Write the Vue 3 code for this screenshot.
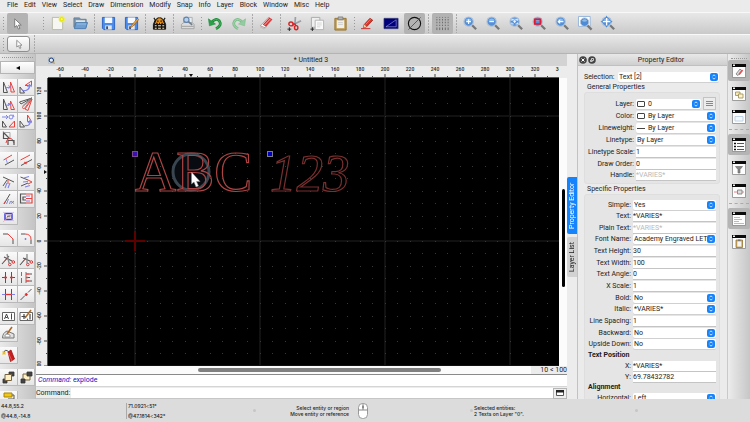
<script setup>
import { computed, h, onBeforeUnmount, onMounted, ref } from 'vue'

/* Each stroke is [path data, stroke colour, fill colour, stroke width]. */
const Ico = (props) =>
  h(
    'svg',
    { viewBox: `0 0 ${props.box} ${props.box}`, 'aria-hidden': 'true' },
    props.shapes.map(([d, stroke, fill, width]) =>
      h('path', { d, stroke: stroke || 'none', fill: fill || 'none', 'stroke-width': width || 1 })
    )
  )
Ico.props = ['box', 'shapes']

const menus = ['File', 'Edit', 'View', 'Select', 'Draw', 'Dimension', 'Modify', 'Snap', 'Info', 'Layer', 'Block', 'Window', 'Misc', 'Help']

const arrow = [['M5 3V12L7.3 10.2L9 14L10.6 13.2L9 9.6H12Z', '#777', '#fff', 1]]
const lens = [
  ['M9.500 9.500L14 14.200', '#777', null, 2.4],
  ['M1 6a5 5 0 1 0 10 0a5 5 0 1 0 -10 0', '#b4c3d4', '#5590d8', 1.2],
  ['M2.500 4.500q3.500 -3.500 7 0q-3.500 2 -7 0', null, '#8dbbea']
]
const floppy = [
  ['M1.500 1.500H14.500V14.500H3L1.500 13Z', '#2b62c4', '#4a8bec', 1],
  ['M4 1.500H12V7.500H4Z', null, '#f4f8ff'],
  ['M4.500 10H11.500V14.500H4.500Z', null, '#dfe6f0'],
  ['M5.500 11H7.500V14H5.500Z', null, '#37507d']
]

const toolbar = [
  { name: 'New', icon: [['M2.500 1.500H13.500V14.500H2.500Z', '#b9b9a8', '#f6f6f2'], ['M9.500 3.500a3 3 0 1 0 6 0a3 3 0 1 0 -6 0', '#eeee70', '#e5e510', 1], ['M11.500 3.500a1 1 0 1 0 2 0a1 1 0 1 0 -2 0', null, '#ffffb0']] },
  { name: 'Open', icon: [['M1 2H7L8 3.500H14V12H1Z', '#6b7f93', '#7995b0', 1], ['M3 4.500H13V9H3Z', null, '#dfe3e6'], ['M3 7H15.500L13.500 13.500H1.500Z', '#4c7cae', '#6e9fd0', 1], ['M4 8.500H14', '#9bc0e4']] },
  { sep: true },
  { name: 'Save', icon: floppy },
  { name: 'Save As', icon: [...floppy, ['M14.500 2.500L8 10L6.500 12.500L9 11.300L15.500 4Z', '#a65e10', '#f7b53a', 0.8]] },
  { sep: true },
  { name: 'Script', icon: [['M4 5L2 2M12 5L14 2', '#111', null, 1.2], ['M3 5L6 2H10L13 5L14.500 9V14H1.500V9Z', '#111', '#19140e', 1], ['M5 4L7 2.500H9L11 4L13 8.500H3Z', null, '#e8921c'], ['M5.500 5.500H7M9 5.500H10.500M4.500 7.800H6M7.500 7.800H8.500M10 7.800H11.500', '#111', null, 1.300], ['M3 10.500H5M6.500 10.500H9.500M11 10.500H13M3 13H5M6.500 13H9.500M11 13H13', '#f3e6c8', null, 1.1]] },
  { sep: true },
  { name: 'Print Preview', icon: [['M4 1.500H13V8H4Z', '#a9b0b8', '#e8edf2'], ['M1.500 9L4 7H13L15 9V13.500H1.500Z', '#a3a3a3', '#dcdcdc'], ['M2 11H14.500', '#9b9b9b'], ['M4 4a2.800 2.800 0 1 0 5.600 0a2.800 2.800 0 1 0 -5.600 0', '#5f82ac', '#b5d1ee', 1.2], ['M9 6L13 9.500', '#6e7f91', null, 1.8]] },
  { sep: true, dots: true },
  { name: 'Undo', icon: [['M3.500 7Q8 1.500 12 5Q15.500 10 8.500 13.500', '#1b8a3a', null, 3], ['M3.500 7Q8 1.500 12 5Q15.500 10 8.500 13.500', '#46b85e', null, 1], ['M0.500 3L1.500 10.500L8 8.500Z', '#1b8a3a', '#2ba04a', 0.6]] },
  { name: 'Redo', icon: [['M12.500 7Q8 1.500 4 5Q0.500 10 7.500 13.500', '#7dbd8b', null, 3], ['M12.500 7Q8 1.500 4 5Q0.500 10 7.500 13.500', '#a5d8ae', null, 1], ['M15.500 3L14.500 10.500L8 8.500Z', '#7dbd8b', '#93cc9f', 0.6]] },
  { sep: true },
  { name: 'Erase', icon: [['M1.500 10.500L10 1.500L14 4L6.500 12.500Z', '#a77', '#fff', 0.7], ['M4 9L11 1.500L14 3.500L7.500 11.500Z', null, '#d33030'], ['M6 9.500L12.500 2.800', '#f6c0c0', null, 1], ['M1 11.500L5.500 14L8 11.500', '#bbb', null, 1]] },
  { sep: true },
  { name: 'Cut', icon: [['M9 1L8.500 8L6 11', '#9aa0a6', null, 1.800], ['M15 5L8 8.500', '#9aa0a6', null, 1.800], ['M2 8.500a2 1.800 0 1 0 4.500 0a2 1.800 0 1 0 -4.500 0M8 12.500a1.800 2.200 0 1 0 3.600 0a1.800 2.200 0 1 0 -3.600 0', '#d62222', null, 1.500], ['M6 8.500H8.500L9.500 10.500', '#d62222', null, 1.500], ['M0.500 14H4.500M2.500 12V16', '#222']] },
  { name: 'Copy', icon: [['M1.500 1.500H10.500V12H1.500Z', '#aaa', '#efefef'], ['M5.500 4.500H14.500V14.500H5.500Z', '#b2b2b2', '#fafafa'], ['M7.500 7.500H12.500M7.500 9.500H12.500M7.500 11.500H11', '#d4d4d4'], ['M0.500 14H4.500M2.500 12V16', '#222']] },
  { name: 'Paste', icon: [['M2 2.500H14V15H2Z', '#96742f', '#c09a50', 1], ['M4 4.500H12V13H4Z', null, '#eef0ee'], ['M5.500 1H10.500V4H5.500Z', '#777', '#b5b5b5', 0.8], ['M5.500 7H10.500M5.500 9H10.500', '#ccc']] },
  { sep: true, dots: true },
  { name: 'Edit', icon: [['M0 13.500H10', '#c22', null, 1], ['M2.500 12.500L3.500 9L9.500 2.500L12.500 4.500L6 11.500Z', '#8d1c12', '#e0342a', 0.8], ['M2.500 12.500L3.500 9L6 11.500Z', null, '#f0cfa0'], ['M5 9L10.500 3', '#ff8a7a', null, 0.8]] },
  { name: 'Draft', icon: [['M0 2.500H15V13.500H0Z', '#333a70', '#00007c', 0.8], ['M2 11.500L13 4V11.500Z', '#b0b0ec', null, 0.6]] },
  { name: 'No fill', on: true, icon: [['M1.500 8a6.500 6.500 0 1 0 13 0a6.500 6.500 0 1 0 -13 0', '#111', null, 1.2], ['M1.500 14.500L14.500 1.500', '#3a3ad8', null, 0.9]] },
  { sep: true },
  { name: 'Grid', on: true, icon: [['M2 1V15M5 1V15M8 1V15M11 1V15M14 1V15', '#555', null, 0.8], ['M1 2.500H15M1 5.500H15M1 8.500H15M1 11.500H15', '#b3b3b3', null, 1.500]] },
  { sep: true },
  { name: 'Zoom In', icon: [...lens, ['M3.500 6H8.500M6 3.500V8.500', '#fff', null, 1.200]] },
  { name: 'Zoom Out', icon: [...lens, ['M3.500 6H8.500', '#fff', null, 1.200]] },
  { name: 'Auto Zoom', icon: [...lens, ['M3 5V3.500H5M7 3.500H9V5M9 7V8.500H7M5 8.500H3V7M4.500 6H7.500M6 4.500V7.500', '#fff', null, 0.9]] },
  { name: 'Zoom to Selection', icon: [...lens, ['M3 3.500H9V8.500H3Z', '#e01830', null, 1.800]] },
  { name: 'Previous View', icon: [...lens, ['M2.500 6L5.500 3.500V5.300H9V6.700H5.500V8.500Z', null, '#fff']] },
  { name: 'Window Zoom', icon: [['M0.500 0.500H13V11H0.500Z', '#94b4da', '#fff', 1], ['M10 10L14.500 14.500', '#777', null, 2.400], ['M2.500 6.500a4.500 4.500 0 1 0 9 0a4.500 4.500 0 1 0 -9 0', '#b4c3d4', '#4f8ad4', 1], ['M4 5q3 -3 6 0q-3 2 -6 0', null, '#8dbbea']] },
  { name: 'Pan', icon: [...lens, ['M6 0V12M0 6H12', '#fff', null, 1.400], ['M6 -0.500L4.500 2H7.500ZM6 12.500L4.500 10H7.500ZM-0.500 6L2 4.500V7.500ZM12.500 6L10 4.500V7.500Z', null, '#4a86d0']] }
]

const K = '#555'
const R = '#e8433f'
const B = '#7f84ea'
const toolGroups = [
  [
    { name: 'Move', icon: [['M3.500 3V13.500H7.500Z', K], ['M10.500 3L14.500 13H11Z', R], ['M5 9L10.500 8M8.500 6.500L10.500 8L8.500 9.500', B]] },
    { name: 'Rotate', icon: [['M2 8V14H6.500Z', K], ['M7 6.500L13.500 2V6.500Z', R], ['M6 12Q12 11 11.500 6M9.500 8L11.500 5.500L13.500 8M4 11L7 12', B, null, 1.200]] },
    { name: 'Scale', icon: [['M3.500 3V13.500H7.500Z', K], ['M10.500 5L14.500 13.500H11Z', R], ['M5 9.500L11 8.500M8 7L10 9M10 7L8 10', B]] },
    { name: 'Mirror', icon: [['M1.500 6L14 2L3 8Z', K], ['M14 3L7 13L10 14.500Z', R], ['M13.500 2.500L4 11.500L6 13Z', R, null, 0.8], ['M13.500 2L4.500 10', '#888']] },
    { name: 'Move and Rotate', icon: [['M2.500 8V14H6.500Z', K], ['M9 14L14.500 8V14Z', R], ['M2 4H8M6 2L8 4L6 6M9 4a2 2 0 1 0 4 0a2 2 0 1 0 -4 0M13 1.500L14 4', B]] },
    { name: 'Rotate Two', icon: [['M2 8V14H6.500Z', K], ['M9.500 2L13.500 8.500H9.500Z', R], ['M6.500 12.500Q12.500 13.500 12 8M10 10L12 7.500L13.500 10', B, null, 1.200]] },
    { name: 'Flip', icon: [['M3.500 2.500V8.500H9.500Z', K, null, 1.200], ['M3.500 2.500H10V8', '#999', null, 0.8], ['M6 13Q7 7 12 9L14 13', R], ['M8 15V10.500H14V15', K, null, 1.200]] }
  ],
  [
    { name: 'Parallel', icon: [['M3.500 8L12 3', R], ['M5 13L14 8', K], ['M6 7L7.500 11.500', B, null, 0.8]] },
    { name: 'Parallel Through', icon: [['M2.500 8L12 3', R], ['M3 13.500L14 7.500', K], ['M6 11.500L9 10M6.500 10L8.500 12', R, null, 1.200]] }
  ],
  [
    { name: 'Trim', icon: [['M3 3L14 8', K], ['M3 12L7 6', K], ['M8 10V5', R], ['M7 9L5 14M10 9L8 14', B, null, 1.100]] },
    { name: 'Trim Both', icon: [['M2.500 3L10 6M3 12L10 9', K], ['M10 6L14 8L10 10', R], ['M6 4L11 2.500M5 8L10 7.500M7 13L12 11.500', B, null, 1.200]] },
    { name: 'Lengthen', icon: [['M4 13L10 3', K], ['M4 13L5.500 10', R], ['M8.500 8L6.500 13M10.500 10L9.500 13', B], ['M11 10L14 12.500M14 10L11 12.500', '#777', null, 0.8]] },
    { name: 'Stretch', icon: [['M8 3H2.500V12H8M8 6H5V9H8', K, null, 1.200], ['M8 3H14V12H8M14 7.500H8', R, null, 1.200], ['M8 5H12M8 10H12', B]] },
    { name: 'Clip', icon: [['M5 5.500H12V11.500H5Z', '#3737dd', null, 1.400], ['M3 14L14 4M3 4L14 13', '#f0a6a4', null, 0.7], ['M7 9.500Q7 7.500 10.500 8', K]] }
  ],
  [
    { name: 'Chamfer', icon: [['M3 4H8', K], ['M8 4L13 9', R], ['M13 9V14', K]] },
    { name: 'Round', icon: [['M3 4H7M13 9.500V14', K], ['M7 4Q13 4 13 9.500', R], ['M6.500 9H8.500M7.500 8V10', B]] }
  ],
  [
    { name: 'Break Out', icon: [['M2 12L9 4M4 5L12 9', K, null, 1.100], ['M7 2L9 11', '#888', null, 1.300], ['M8.500 12.500a1.300 1.300 0 1 0 2.600 0a1.300 1.300 0 1 0 -2.600 0M12 10a1.300 1.300 0 1 0 2.600 0a1.300 1.300 0 1 0 -2.600 0', '#e03030'], ['M3.500 10.500L7 6.500', R]] },
    { name: 'Divide', icon: [['M2 13L8 6M5 6L12 9', K, null, 1.100], ['M9 2L9 11', '#888', null, 1.300], ['M8.500 12.500a1.300 1.300 0 1 0 2.600 0a1.300 1.300 0 1 0 -2.600 0M12 10a1.300 1.300 0 1 0 2.600 0a1.300 1.300 0 1 0 -2.600 0', '#e03030'], ['M5 9.500L7.500 6.500', R]] },
    { name: 'Break Gap', icon: [['M5.500 3V14M11.500 3V14', K], ['M2 8.500H5M12 8.500H15', K], ['M4 8.500H7M10 8.500H13', '#e03030', null, 1.300]] },
    { name: 'Align', icon: [['M3.500 3V7M3.500 9V14M8 3V14', K, null, 0.8], ['M8 5H11M8 8.500H10M8 12H11', R, null, 1.300], ['M11 5H14M10 8.500H12M11 12H14', K]] },
    { name: 'Auto Trim', icon: [['M5.500 3V14M11.500 3V14', K], ['M2 8.500H15', B], ['M5.500 8.500H11.500', '#e03030', null, 1.300]] },
    { name: 'Break at Point', icon: [['M2.500 14L7 9.500M10 6.500L13.500 3', K], ['M7.300 8.500a1 1 0 1 0 2 0a1 1 0 1 0 -2 0', '#e22', '#e22']] }
  ],
  [
    { name: 'Edit Text', icon: [['M2.500 4.500H14.500V12.500H2.500Z', '#555', '#fff', 0.9], ['M4.500 11L6.500 6L8.500 11M5.500 9.500H7.500M11.500 5.500V11.500', '#333', null, 0.9]] },
    { name: 'Edit Hatch', icon: [['M2 4.500H14.500V12.500H2Z', '#555', '#fff', 0.9], ['M3.500 8.500H8M6 6V11M9 11.500L10 11M12 6V11.500', '#444', null, 1.200], ['M7 10L13 2', '#ad6a2a', null, 1.600]] },
    { name: 'Edit Part', icon: [['M2.500 13Q2.500 8 7 6L14 9V13Z', '#777', '#e2e2e2'], ['M5 12V10Q7 8 10 10V12Z', '#888', '#fff', 0.8], ['M7 9L12 2', '#ad6a2a', null, 1.600]] }
  ],
  [
    { name: 'Explode', icon: [['M8 5L11 3L14.500 12L10.500 14.500Z', '#9c1414', '#c91c1c', 0.8], ['M8.500 6L12 14', '#f06060', null, 0.8], ['M4 5Q5 2 8.500 4.500', '#444'], ['M2 6H6M4 4V8M2.500 4.500L5.500 7.500M5.500 4.500L2.500 7.500', '#e8b920', null, 0.8]] }
  ],
  [
    { name: 'Bring to Front', icon: [['M9 3H14V7H9ZM3 10H7V14H3Z', '#333', '#444', 0.8], ['M5 5.500H11.500V11.500H5Z', '#77643e', '#fff0c4', 1]] },
    { name: 'Send to Back', icon: [['M5 5H12V11H5Z', '#77643e', '#fff0c4', 1], ['M9 3H14V7H9ZM3 10H7V14H3Z', '#333', '#444', 0.8]] }
  ],
  [
    { name: 'Paint', icon: [['M4 2H12V6H4Z', '#a78500', '#f0c619'], ['M12 4H14V8H8V11', K], ['M7 10H9V14H7Z', null, '#333']] }
  ]
]

const win = [['M1.500 1.500H14.500V14.500H1.500Z', '#888', '#fdfdfd', 0.8], ['M1 1H15V4H1Z', null, '#0a0a0a'], ['M2 1.500H4V3H2Z', null, '#eee']]
const docks = [
  { name: 'Property Editor', on: true, icon: [...win, ['M5 11L9 6L11 8L7 12.500Z', '#777', '#ddd', 0.8], ['M8 11.500L11.500 7', '#e05555', null, 1.800]] },
  { name: 'Block List', icon: [...win, ['M4.500 6H9V9.500H4.500Z', '#9a8a50', '#f6eab8', 0.8], ['M7.500 8H12V12H7.500Z', '#9a8a50', '#fdf3cc', 0.8]] },
  { name: 'View List', icon: [...win, ['M4 7.500H12V12H4Z', '#b9cfe4', '#f4f9ff', 0.9]] },
  { sep: true },
  { name: 'Layer List', on: true, icon: [...win, ['M3 6.500H5M3 9.500H5M3 12.500H5', '#111', null, 1.500], ['M6 6.500H13M6 9.500H13M6 12.500H13', '#555', null, 1.200]] },
  { name: 'Selection Filter', icon: [...win, ['M4.500 6.500H11.500L9 9.500V13H7V9.500Z', '#666', '#888', 0.6]] },
  { name: 'Library', icon: [...win, ['M3 9H6M10 9H13', '#d66', null, 0.8], ['M6.500 7H11V11H6.500Z', '#777', '#ddd', 0.8]] },
  { sep: true },
  { name: 'Command Line', on: true, icon: [...win, ['M3 6.500H9M3 8.500H11M3 10.500H8M3 12.500H13', '#aaa', null, 0.8]] },
  { name: 'Clipboard', icon: [...win, ['M5 6H11.500V13.500H5Z', '#96742f', '#d2ac68', 0.8], ['M6.300 7.500H10.300V12.500H6.300Z', null, '#f4f4f4'], ['M7 5.500H9.500V7H7Z', null, '#777']] }
]

const general = [
  { label: 'Color:', value: 'By Layer', kind: 'select', swatch: 'box' },
  { label: 'Lineweight:', value: 'By Layer', kind: 'select', swatch: 'line' },
  { label: 'Linetype:', value: 'By Layer', kind: 'select' },
  { label: 'Linetype Scale:', value: '1' },
  { label: 'Draw Order:', value: '0' },
  { label: 'Handle:', value: '*VARIES*', dim: true }
]
const specific = [
  { label: 'Simple:', value: 'Yes', kind: 'select' },
  { label: 'Text:', value: '*VARIES*' },
  { label: 'Plain Text:', value: '*VARIES*', dim: true },
  { label: 'Font Name:', value: 'Academy Engraved LET', kind: 'select' },
  { label: 'Text Height:', value: '30' },
  { label: 'Text Width:', value: '100' },
  { label: 'Text Angle:', value: '0' },
  { label: 'X Scale:', value: '1' },
  { label: 'Bold:', value: 'No', kind: 'select' },
  { label: 'Italic:', value: '*VARIES*', kind: 'select' },
  { label: 'Line Spacing:', value: '1' },
  { label: 'Backward:', value: 'No', kind: 'select' },
  { label: 'Upside Down:', value: 'No', kind: 'select' }
]
const position = [
  { label: 'X:', value: '*VARIES*' },
  { label: 'Y:', value: '69.78432782' }
]

/* View transform of the drawing: origin and pixels per unit. */
const X0 = 87
const Y0 = 163
const scale = 1.25
const canvas = ref(null)
const size = ref({ w: 511, h: 288 })
const measure = () => {
  const r = canvas.value.getBoundingClientRect()
  size.value = { w: r.width, h: r.height }
}
onMounted(() => {
  measure()
  window.addEventListener('resize', measure)
})
onBeforeUnmount(() => window.removeEventListener('resize', measure))

const range = (from, to, step) => Array.from({ length: Math.floor((to - from) / step) + 1 }, (_, i) => from + i * step)
const xTicks = computed(() =>
  range(-60, (size.value.w + 3 - X0) / scale, 10).map((u) => ({ u, p: X0 + u * scale, major: u % 20 === 0 }))
)
const yTicks = computed(() => {
  const bottom = -Math.floor((size.value.h + 3 - Y0) / scale / 10) * 10
  return range(bottom, 120, 10).map((u) => ({ u, p: Y0 - u * scale, major: u % 20 === 0 }))
})
const xMeta = computed(() => xTicks.value.filter((t) => t.u % 100 === 0))
const yMeta = computed(() => yTicks.value.filter((t) => t.u % 100 === 0))
const command = ref('')
</script>

<template>
  <div class="app">
    <nav class="menubar">
      <a v-for="m in menus" :key="m" href="#">{{ m }}</a>
    </nav>

    <div class="toolbar">
      <span class="sep dots"></span>
      <button class="tb on first" aria-label="Select"><Ico :box="16" :shapes="arrow" /></button>
      <span class="sep dots"></span>
      <template v-for="(t, i) in toolbar" :key="i">
        <span v-if="t.sep" class="sep" :class="{ dots: t.dots }"></span>
        <button v-else class="tb" :class="{ on: t.on }" :aria-label="t.name"><Ico :box="16" :shapes="t.icon" /></button>
      </template>
    </div>

    <div class="options">
      <span class="sep dots"></span>
      <button class="mode" aria-label="Selection mode"><Ico :box="16" :shapes="arrow" /></button>
      <span class="sep"></span>
    </div>

    <div class="main">
      <aside class="tools">
        <div class="grip"></div>
        <button class="back" aria-label="Back"><svg viewBox="0 0 4 4"><path d="M4 0V4L0 2Z" /></svg></button>
        <div v-for="(g, i) in toolGroups" :key="i" class="group">
          <button v-for="t in g" :key="t.name" class="tool" :aria-label="t.name"><Ico :box="17" :shapes="t.icon" /></button>
        </div>
      </aside>

      <section class="document">
        <header class="doc-title">
          <svg class="doc-icon" viewBox="0 0 8 8"><rect x="0.500" y="0.500" width="7" height="6.500" fill="#e8edf8" stroke="#9aa" stroke-width="0.500" /><circle cx="3.800" cy="3.600" r="2.500" fill="none" stroke="#24427f" stroke-width="1.200" /><path d="M5.300 5.300L7.500 7.500" stroke="#d99a2c" stroke-width="1.400" /></svg>
          <span>* Untitled 3</span>
        </header>
        <div class="view">
          <div class="corner"></div>
          <svg class="ruler-x">
            <g v-for="t in xTicks" :key="t.u">
              <path :d="`M${t.p} ${t.major ? 8 : 10}V12`" stroke="#444" />
              <text v-if="t.major" :x="t.p" y="5" text-anchor="middle">{{ t.u }}</text>
            </g>
            <path d="M141 8H145L143 11Z" fill="#111" />
            <path d="M0 11.500H4000" stroke="#555" />
          </svg>
          <svg class="ruler-y">
            <g v-for="t in yTicks" :key="t.u">
              <path :d="`M${t.major ? 8 : 10} ${t.p}H12`" stroke="#444" />
              <text v-if="t.major" :transform="`translate(5 ${t.p}) rotate(-90)`" text-anchor="middle">{{ t.u }}</text>
            </g>
            <path d="M8 92V96L11 94Z" fill="#111" />
            <path d="M11.500 0V4000" stroke="#555" />
          </svg>
          <svg ref="canvas" class="canvas">
            <path v-for="t in xMeta" :key="'v' + t.u" :d="`M${t.p} 0V${size.h}`" stroke="#111" stroke-width="2" />
            <path v-for="t in yMeta" :key="'h' + t.u" :d="`M0 ${t.p}H${size.w}`" stroke="#111" stroke-width="2" />
            <g fill="#383838">
              <template v-for="y in yTicks" :key="y.u">
                <rect v-for="x in xTicks" :key="x.u" :x="Math.floor(x.p)" :y="Math.floor(y.p)" width="1" height="1" />
              </template>
            </g>
            <path :d="`M${X0 - 10} ${Y0}h20M${X0} ${Y0 - 10}v20`" stroke="#5c0000" stroke-width="2" />
            <circle cx="143" cy="94" r="18" fill="#080b0f" stroke="#394650" stroke-width="3" />
            <text class="entity" x="87" y="113">ABC</text>
            <text class="entity italic" x="222" y="113">123</text>
            <rect x="84.500" y="73.500" width="5" height="5" fill="#3a10b0" stroke="#7a4a90" />
            <rect x="219.500" y="73.500" width="5" height="5" fill="#0000c0" stroke="#7c7c90" />
            <path d="M143.500 94V106L146 104L148 109L150.500 108L148.500 103.500H152Z" fill="#fff" stroke="#888" stroke-width="0.500" />
          </svg>
          <div class="vscroll"><div class="vthumb"></div></div>
          <div class="hrow">
            <div class="hscroll"><div class="hthumb"></div></div>
            <span class="gridinfo">10 &lt; 100</span>
          </div>
        </div>
        <div class="history"><em>Command:</em> explode</div>
        <div class="cmd">
          <label for="cmd">Command:</label>
          <input id="cmd" v-model="command" type="text" />
          <button aria-label="Toggle history"><svg viewBox="0 0 8 6"><path d="M0.500 0.500H7.500V5.500H0.500Z" fill="#fff" stroke="#555" /><path d="M0 0H8V2.500H0Z" fill="#222" /></svg></button>
        </div>
      </section>

      <div class="tabs">
        <button class="tab active">Property Editor</button>
        <button class="tab">Layer List</button>
      </div>

      <section class="panel">
        <header class="panel-head">
          <button class="round" aria-label="Close"><svg viewBox="0 0 8 8"><circle cx="4" cy="4" r="3.800" fill="#444" /><path d="M2.500 2.500L5.500 5.500M5.500 2.500L2.500 5.500" stroke="#fff" /></svg></button>
          <button class="round" aria-label="Float"><svg viewBox="0 0 8 8"><circle cx="4" cy="4" r="3.800" fill="#444" /><path d="M3.500 2.500H5.500V4.500H3.500ZM2.500 3.800V5.500H4.500" fill="none" stroke="#fff" stroke-width="0.700" /></svg></button>
          <h2>Property Editor</h2>
        </header>
        <div class="panel-body">
          <div class="selection">
            <label for="sel">Selection:</label>
            <span class="combo"><select id="sel"><option>Text [2]</option></select><svg class="knob" viewBox="0 0 8 8"><path d="M2.500 3.300L4 1.800L5.500 3.300M2.500 4.700L4 6.200L5.500 4.700" /></svg></span>
          </div>
          <h3>General Properties</h3>
          <div class="box general">
            <div class="row tall">
              <label for="layer">Layer:</label>
              <span class="combo swatched"><i class="sw-box"></i><select id="layer"><option>0</option></select><svg class="knob" viewBox="0 0 8 8"><path d="M2.500 3.300L4 1.800L5.500 3.300M2.500 4.700L4 6.200L5.500 4.700" /></svg></span>
              <button class="list" aria-label="Layers"><svg viewBox="0 0 7 5"><path d="M0 0.500H7M0 2.500H7M0 4.500H7" stroke="#888" /></svg></button>
            </div>
            <div v-for="(f, i) in general" :key="f.label" class="row">
              <label :for="'g' + i">{{ f.label }}</label>
              <span v-if="f.kind" class="combo" :class="{ swatched: f.swatch }"><i v-if="f.swatch" :class="'sw-' + f.swatch"></i><select :id="'g' + i"><option>{{ f.value }}</option></select><svg class="knob" viewBox="0 0 8 8"><path d="M2.500 3.300L4 1.800L5.500 3.300M2.500 4.700L4 6.200L5.500 4.700" /></svg></span>
              <input v-else :id="'g' + i" type="text" :value="f.value" :class="{ dim: f.dim }" />
            </div>
          </div>
          <h3>Specific Properties</h3>
          <div class="box specific">
            <div class="fields">
              <div v-for="(f, i) in specific" :key="f.label" class="row">
                <label :for="'s' + i">{{ f.label }}</label>
                <span v-if="f.kind" class="combo"><select :id="'s' + i"><option>{{ f.value }}</option></select><svg class="knob" viewBox="0 0 8 8"><path d="M2.500 3.300L4 1.800L5.500 3.300M2.500 4.700L4 6.200L5.500 4.700" /></svg></span>
                <input v-else :id="'s' + i" type="text" :value="f.value" :class="{ dim: f.dim }" />
              </div>
            </div>
            <h4>Text Position</h4>
            <div v-for="(f, i) in position" :key="f.label" class="row">
              <label :for="'p' + i">{{ f.label }}</label>
              <input :id="'p' + i" type="text" :value="f.value" />
            </div>
            <h4>Alignment</h4>
            <div class="row">
              <label for="halign">Horizontal:</label>
              <span class="combo"><select id="halign"><option>Left</option></select><svg class="knob" viewBox="0 0 8 8"><path d="M2.500 3.300L4 1.800L5.500 3.300M2.500 4.700L4 6.200L5.500 4.700" /></svg></span>
            </div>
          </div>
        </div>
      </section>

      <aside class="dock">
        <div class="dock-grip"></div>
        <template v-for="(d, i) in docks" :key="i">
          <span v-if="d.sep" class="dock-sep"></span>
          <button v-else class="dock-btn" :class="{ on: d.on }" :aria-label="d.name"><Ico :box="16" :shapes="d.icon" /></button>
        </template>
      </aside>
    </div>

    <footer class="status">
      <div class="coords abs"><span>44.8,55.2</span><span>@44.8,-14.8</span></div>
      <div class="coords polar"><span>71.0921&lt;51°</span><span>@47.1814&lt;342°</span></div>
      <i class="dot"></i>
      <div class="hint"><span>Select entity or region</span><span>Move entity or reference</span></div>
      <svg class="mouse" viewBox="0 0 10 16"><rect x="0.500" y="0.500" width="9" height="15" rx="4" fill="#fff" stroke="#999" /><path d="M0.500 7H9.500M5 0.500V7" stroke="#888" fill="none" /><rect x="4" y="2.500" width="2" height="3" rx="1" fill="#888" /></svg>
      <div class="entities"><i class="dot"></i><div class="lines"><span>Selected entities:</span><span>2 Texts on Layer "0".</span></div></div>
      <i class="dot last"></i>
    </footer>
  </div>
</template>

<style>
body {
  overflow: hidden;
}
</style>

<style scoped>
.app {
  display: flex;
  flex-direction: column;
  height: 100vh;
  background: #ececec;
  color: #1c1c1c;
  font-family: Roboto, "Liberation Sans", sans-serif;
  font-size: 7px;
  line-height: 10px;
}
.app * {
  box-sizing: border-box;
}
button,
input,
select {
  margin: 0;
  padding: 0;
  border: 0;
  border-radius: 0;
  outline: 0;
  background: none;
  color: inherit;
  font: inherit;
}
svg {
  display: block;
}
.menubar {
  display: flex;
  flex: none;
  gap: 6px;
  height: 12px;
  padding: 0 7px;
  background: #ebebeb;
}
.menubar a {
  color: inherit;
  text-decoration: none;
}
.toolbar,
.options {
  display: flex;
  flex: none;
  align-items: center;
  gap: 2px;
  height: 22px;
  padding-left: 2px;
  border-top: 1px solid #f8f8f8;
  background: linear-gradient(#e8e8e8, #c9c9c9);
}
.tb {
  display: grid;
  flex: none;
  place-items: center;
  width: 21px;
  height: 21px;
}
.tb svg {
  width: 15px;
  height: 15px;
  overflow: visible;
}
.tb.on {
  border-radius: 2px;
  background: #b3b3b3;
}
.tb.first {
  margin-right: 12px;
}
.sep {
  flex: none;
  width: 3px;
  height: 19px;
  background: linear-gradient(to right, transparent 1px, #aaa 1px, #aaa 2px, transparent 2px);
  mask: repeating-linear-gradient(#000 0 2px, transparent 2px 3px);
}
.sep.dots {
  height: 13px;
  background: linear-gradient(to right, transparent 1px, #999 1px, #999 2px, transparent 2px);
  mask: repeating-linear-gradient(#000 0 1px, transparent 1px 3px);
}
.options {
  height: 20px;
  border-bottom: 1px solid #b4b4b4;
}
.mode {
  display: grid;
  place-items: center;
  width: 23px;
  height: 16px;
  margin-right: 1px;
  border: 1px solid #8f8f8f;
  border-radius: 3px;
  background: linear-gradient(#fff, #e0e0e0);
}
.mode svg {
  width: 12px;
  height: 12px;
}
.main {
  display: flex;
  flex: 1;
  min-height: 0;
}
.tools {
  flex: none;
  width: 36px;
  overflow: hidden;
  border-right: 1px solid #bdbdbd;
  background: linear-gradient(to right, #e9e9e9, #c4c4c4);
}
.grip {
  height: 4px;
  margin: 0 2px 3px;
  border-bottom: 1px dotted #999;
}
.back {
  display: grid;
  place-items: center;
  width: 100%;
  height: 13px;
  margin-bottom: 5px;
  border: 1px solid #b5b5b5;
  background: linear-gradient(#fff, #e8e8e8);
}
.back svg {
  width: 4px;
  height: 4px;
}
.group {
  display: grid;
  grid-template-columns: 18px 17px;
  grid-auto-rows: 17px;
  margin-bottom: 5px;
}
.tool {
  display: grid;
  place-items: center;
  overflow: hidden;
  border: 1px solid #b9b9b9;
  border-width: 0 1px 1px 0;
  background: linear-gradient(#fafafa, #e6e6e6);
}
.tool svg {
  width: 17px;
  height: 17px;
}
.document {
  display: flex;
  flex: 1;
  flex-direction: column;
  min-width: 0;
}
.doc-title {
  display: flex;
  flex: none;
  align-items: center;
  height: 12px;
  padding-left: 12px;
  background: #d3d3d3;
}
.doc-title span {
  flex: 1;
  text-align: center;
}
.doc-icon {
  width: 7px;
  height: 7px;
}
.view {
  display: grid;
  flex: 1;
  grid-template: 12px minmax(0, 1fr) 9px / 12px minmax(0, 1fr) 8px;
  min-height: 0;
  background: #ececec;
}
.ruler-x,
.ruler-y,
.canvas {
  width: 100%;
  height: 100%;
  overflow: hidden;
}
.ruler-x,
.ruler-y {
  fill: #333;
  font-size: 5px;
  font-weight: 600;
}
.ruler-y,
.corner {
  grid-column: 1;
}
.canvas {
  background: #000;
}
.ruler-x {
  grid-column: 2;
}
.entity {
  fill: none;
  stroke: #ac4444;
  stroke-width: 1.2;
  font: 57px "Liberation Serif", serif;
}
.entity.italic {
  stroke: #7a2f2f;
  font-size: 53px;
  font-style: italic;
}
.vscroll {
  padding: 111px 2px 0 3px;
  background: #fcfcfc;
}
.vthumb {
  height: 98px;
  border-radius: 2px;
  background: #000;
}
.hrow {
  display: flex;
  grid-column: 1 / -1;
  border-bottom: 1px solid #8a8a8a;
}
.hscroll {
  flex: 1;
  padding: 2px 90px 2px 162px;
  background: #fbfbfb;
}
.hthumb {
  height: 4px;
  border-radius: 2px;
  background: #808080;
}
.gridinfo {
  flex: none;
  width: 36px;
  line-height: 9px;
  text-align: right;
}
.history {
  flex: none;
  height: 11px;
  padding-left: 2px;
  background: #fff;
  color: #1212c4;
}
.cmd {
  display: flex;
  flex: none;
  align-items: center;
  height: 13px;
  padding-top: 1px;
  border-top: 1px solid #d5d5d5;
  border-bottom: 1px solid #c6c6c6;
}
.cmd label {
  flex: none;
  width: 35px;
}
.cmd input {
  flex: 1;
  min-width: 0;
  height: 10px;
  background: #fff;
}
.cmd button {
  display: grid;
  place-items: center;
  width: 14px;
  height: 11px;
  border: 1px solid #b5b5b5;
  background: #eee;
}
.cmd svg {
  width: 8px;
  height: 6px;
}
.tabs {
  display: flex;
  flex: none;
  flex-direction: column;
  gap: 3px;
  width: 10px;
  padding-top: 123px;
}
.tab {
  width: 10px;
  height: 40px;
  border-radius: 0 2px 2px 0;
  background: #d2d2d2;
  line-height: 10px;
  writing-mode: vertical-rl;
  transform: rotate(180deg);
}
.tab.active {
  height: 57px;
  background: #1583fb;
  color: #fff;
}
.panel {
  display: flex;
  flex: none;
  flex-direction: column;
  width: 151px;
  border-right: 1px solid #c9c9c9;
  border-left: 1px solid #c2c2c2;
}
.panel-head {
  display: flex;
  flex: none;
  align-items: center;
  gap: 1px;
  height: 12px;
  padding-left: 1px;
  border-bottom: 1px solid #c0c0c0;
  background: linear-gradient(#e8e8e8, #cfcfcf);
}
.round,
.round svg {
  width: 8px;
  height: 8px;
}
.panel-head h2 {
  flex: 1;
  padding-right: 2px;
  text-align: center;
}
h2,
h3,
h4 {
  margin: 0;
  font-size: 7px;
  font-weight: 400;
}
.panel-body {
  flex: 1;
  min-height: 0;
  overflow: hidden;
  padding: 6px 7px 0 6px;
  background: #ebebeb;
}
.selection {
  display: flex;
  align-items: center;
  gap: 4px;
  padding-right: 1px;
}
.selection label,
.row label {
  flex: none;
  text-align: right;
}
.selection label {
  width: 30px;
}
h3 {
  padding: 0 3px;
  line-height: 9px;
}
.selection + h3 {
  margin-top: 1px;
}
.box {
  display: flex;
  flex-direction: column;
  border: 1px solid #dedede;
  border-radius: 3px;
  background: #e5e5e5;
}
.general {
  justify-content: space-between;
  min-height: 92px;
  margin-bottom: 1px;
  padding: 4px 3px 2px;
}
.specific {
  padding: 4px 3px;
}
.fields {
  display: flex;
  flex-direction: column;
  justify-content: space-between;
  min-height: 151px;
}
.row {
  display: flex;
  flex: none;
  align-items: center;
  gap: 2px;
  height: 11px;
}
.row.tall {
  height: 13px;
}
.row label {
  width: 43px;
  white-space: nowrap;
}
.general .row label {
  width: 46px;
}
.combo {
  display: flex;
  flex: 1;
  align-items: center;
  min-width: 0;
  height: 10px;
  padding: 0 1px;
  border-radius: 2px;
  background: #fff;
  box-shadow: 0 1px 0 #d0d0d0;
}
.combo select {
  flex: 1;
  min-width: 0;
  height: 10px;
  appearance: none;
}
.swatched {
  gap: 3px;
}
.sw-box {
  width: 8px;
  height: 6px;
  border: 1px solid #444;
  border-radius: 1px;
}
.sw-line {
  width: 8px;
  border-top: 1px solid #444;
}
.knob {
  flex: none;
  width: 8px;
  height: 8px;
  border-radius: 2px;
  background: #1583fb;
  fill: none;
  stroke: #fff;
  stroke-width: 0.8;
}
.row input {
  flex: 1;
  min-width: 0;
  height: 10px;
  background: #fff;
  box-shadow: 0 1px 0 #c4c4c4;
}
.row input.dim {
  color: #b9b9b9;
}
.list {
  display: grid;
  place-items: center;
  width: 13px;
  height: 13px;
  border: 1px solid #c3c3c3;
  background: #ececec;
}
.list svg {
  width: 7px;
  height: 5px;
}
h4 {
  flex: none;
  font-weight: 700;
  line-height: 10px;
}
.dock {
  flex: none;
  width: 22px;
  overflow: hidden;
  background: linear-gradient(to right, #ececec, #c6c6c6);
}
.dock-grip {
  height: 5px;
  margin: 0 3px 1px;
  border-bottom: 1px dotted #999;
}
.dock-btn {
  display: grid;
  place-items: center;
  width: 22px;
  height: 21px;
  margin-bottom: 2px;
}
.dock-btn.on {
  border-radius: 2px;
  background: #b4b4b4;
}
.dock-btn svg {
  width: 16px;
  height: 16px;
}
.dock-sep {
  display: block;
  height: 1px;
  margin: 0 1px 4px;
  border-top: 1px dashed #aaa;
}
.status {
  display: flex;
  flex: none;
  align-items: center;
  height: 23px;
  background: #dcdcdc;
  font-family: Inter, "Liberation Sans", sans-serif;
  font-size: 5px;
  font-weight: 500;
  line-height: 6px;
  white-space: nowrap;
}
.status span {
  display: block;
}
.coords {
  display: flex;
  flex: none;
  flex-direction: column;
  gap: 4px;
  padding-left: 1px;
}
.abs {
  width: 126px;
}
.polar {
  width: 127px;
  border-left: 1px solid #aaa;
}
.hint {
  flex: none;
  width: 93px;
  text-align: right;
}
.dot {
  flex: none;
  width: 3px;
  height: 3px;
  border-radius: 50%;
  background: #c6c6c6;
}
.mouse {
  flex: none;
  width: 10px;
  height: 16px;
  margin-left: 9px;
}
.entities {
  display: flex;
  flex: 1;
  align-items: center;
  gap: 1px;
  max-width: 165px;
  margin-left: 102px;
}
</style>
